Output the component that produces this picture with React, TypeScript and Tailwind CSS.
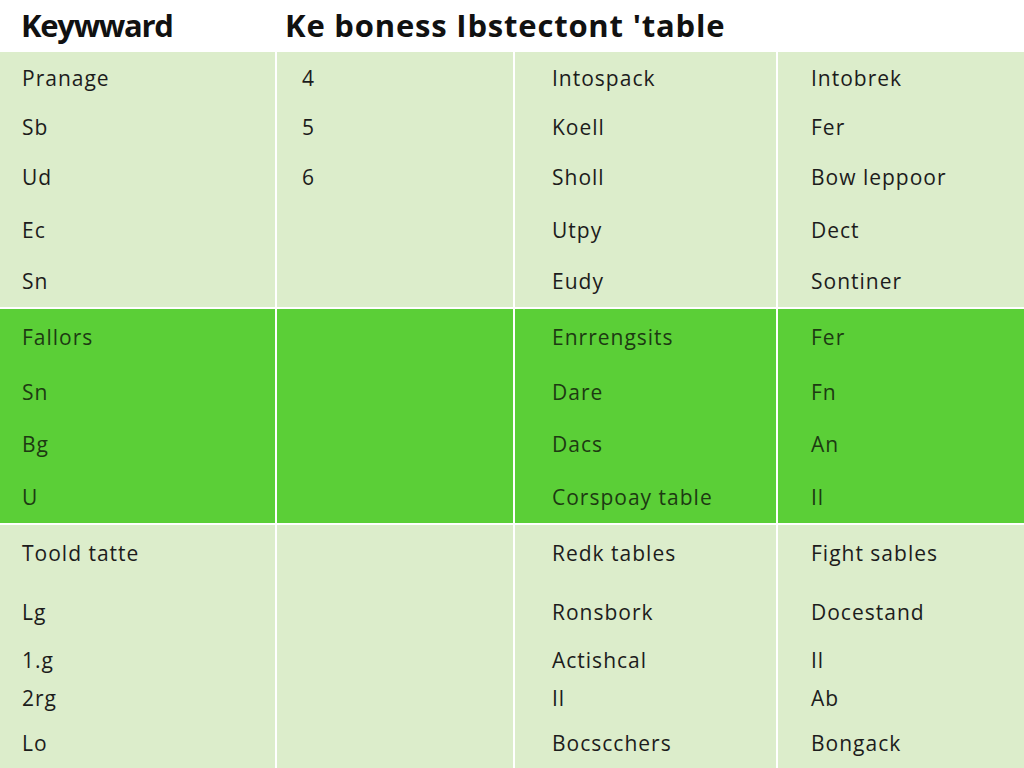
const font = { fontFamily: '"Open Sans", "Noto Sans", sans-serif' };

type Section = {
    bg: string;
    text: string;
    rows: { h: string; cells: string[] }[];
};

const sections: Section[] = [
    {
        bg: 'bg-[#dcedcb]',
        text: 'text-[#1c1c1c]',
        rows: [
            { h: 'h-[54px]', cells: ['Pranage', '4', 'Intospack', 'Intobrek'] },
            { h: 'h-[44px]', cells: ['Sb', '5', 'Koell', 'Fer'] },
            { h: 'h-[56px]', cells: ['Ud', '6', 'Sholl', 'Bow leppoor'] },
            { h: 'h-[50px]', cells: ['Ec', '', 'Utpy', 'Dect'] },
            { h: 'h-[51px]', cells: ['Sn', '', 'Eudy', 'Sontiner'] },
        ],
    },
    {
        bg: 'bg-[#5bcf37]',
        text: 'text-[#1d3a12]',
        rows: [
            { h: 'h-[58px]', cells: ['Fallors', '', 'Enrrengsits', 'Fer'] },
            { h: 'h-[51px]', cells: ['Sn', '', 'Dare', 'Fn'] },
            { h: 'h-[54px]', cells: ['Bg', '', 'Dacs', 'An'] },
            { h: 'h-[51px]', cells: ['U', '', 'Corspoay table', 'Il'] },
        ],
    },
    {
        bg: 'bg-[#dcedcb]',
        text: 'text-[#1c1c1c]',
        rows: [
            { h: 'h-[58px]', cells: ['Toold tatte', '', 'Redk tables', 'Fight sables'] },
            { h: 'h-[60px]', cells: ['Lg', '', 'Ronsbork', 'Docestand'] },
            { h: 'h-[36px]', cells: ['1.g', '', 'Actishcal', 'Il'] },
            { h: 'h-[40px]', cells: ['2rg', '', 'Il', 'Ab'] },
            { h: 'h-[49px]', cells: ['Lo', '', 'Bocscchers', 'Bongack'] },
        ],
    },
];

const pads = ['pl-[22px]', 'pl-[25px]', 'pl-[37px]', 'pl-[33px]'];

export default function App() {
    return (
        <div className="flex h-[768px] w-[1024px] flex-col gap-y-[2px] overflow-hidden bg-white" style={font}>
            <div className="flex h-[51px] items-center text-[31px] font-bold text-[#111]">
                <span className="w-[285px] pl-[21px] tracking-[-1.3px]">Keywward</span>
                <span className="tracking-[0.8px]">Ke boness Ibstectont &#39;table</span>
            </div>

            {sections.map((section, si) => (
                <div key={si} className="grid grid-cols-[275px_236px_261px_246px] gap-x-[2px]">
                    {section.rows.map((row, ri) =>
                        row.cells.map((cell, ci) => (
                            <div
                                key={`${ri}-${ci}`}
                                className={`${row.h} ${section.bg} ${section.text} ${pads[ci]} flex items-center text-[21px] tracking-[1px]`}
                            >
                                {cell}
                            </div>
                        )),
                    )}
                </div>
            ))}
        </div>
    );
}
